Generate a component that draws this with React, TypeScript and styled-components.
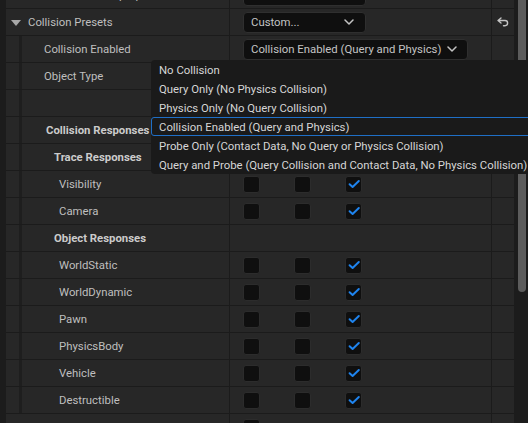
import React from "react";
import styled, { createGlobalStyle } from "styled-components";

const GlobalStyle = createGlobalStyle`
  html, body {
    margin: 0;
    padding: 0;
    background: #1c1c1c;
  }
  * {
    box-sizing: border-box;
  }
`;

type Combo = { kind: "combo"; text: string; width: number };
type Checks = { kind: "checks"; values: boolean[] };

type RowData = {
  label: string;
  pad: number;
  nested?: boolean;
  bold?: boolean;
  expander?: boolean;
  reset?: boolean;
  value?: Combo | Checks;
};

const ON: boolean[] = [false, false, true];

// the panel is scrolled: the first row is mostly above the top edge
const rows: RowData[] = [
  { label: "Can Character Step Up On", pad: 0, value: { kind: "combo", text: "", width: 123 } },
  {
    label: "Collision Presets",
    pad: 0,
    expander: true,
    reset: true,
    value: { kind: "combo", text: "Custom...", width: 123 },
  },
  {
    label: "Collision Enabled",
    pad: 22,
    nested: true,
    value: { kind: "combo", text: "Collision Enabled (Query and Physics)", width: 225 },
  },
  { label: "Object Type", pad: 22, nested: true },
  { label: "", pad: 22, nested: true },
  { label: "Collision Responses", pad: 24, nested: true, bold: true },
  { label: "Trace Responses", pad: 32, nested: true, bold: true },
  { label: "Visibility", pad: 37, nested: true, value: { kind: "checks", values: ON } },
  { label: "Camera", pad: 37, nested: true, value: { kind: "checks", values: ON } },
  { label: "Object Responses", pad: 32, nested: true, bold: true },
  { label: "WorldStatic", pad: 37, nested: true, value: { kind: "checks", values: ON } },
  { label: "WorldDynamic", pad: 37, nested: true, value: { kind: "checks", values: ON } },
  { label: "Pawn", pad: 37, nested: true, value: { kind: "checks", values: ON } },
  { label: "PhysicsBody", pad: 37, nested: true, value: { kind: "checks", values: ON } },
  { label: "Vehicle", pad: 37, nested: true, value: { kind: "checks", values: ON } },
  { label: "Destructible", pad: 37, nested: true, value: { kind: "checks", values: ON } },
  { label: "", pad: 0, value: { kind: "checks", values: [false] } },
];

const menuItems = [
  "No Collision",
  "Query Only (No Physics Collision)",
  "Physics Only (No Query Collision)",
  "Collision Enabled (Query and Physics)",
  "Probe Only (Contact Data, No Query or Physics Collision)",
  "Query and Probe (Query Collision and Contact Data, No Physics Collision)",
];

function Chevron() {
  return (
    <Icon width="10" height="6" viewBox="0 0 10 6">
      <path d="M1 1 L5 5 L9 1" fill="none" stroke="#c4c4c4" strokeWidth="1.5" strokeLinecap="round" strokeLinejoin="round" />
    </Icon>
  );
}

function CheckMark() {
  return (
    <Icon width="16" height="16" viewBox="0 0 16 16">
      <path d="M3.6 8.2 L6.6 11 L12.8 5" fill="none" stroke="#1f84ee" strokeWidth="2" strokeLinecap="round" strokeLinejoin="round" />
    </Icon>
  );
}

function ResetArrow() {
  return (
    <Icon width="12" height="10" viewBox="0 0 12 10">
      <path
        d="M4 1 L1 3.5 L4 6 M1.5 3.5 H8 A2.6 2.6 0 0 1 8 8.7 H6.5"
        fill="none"
        stroke="#c4c4c4"
        strokeWidth="1.4"
        strokeLinecap="round"
        strokeLinejoin="round"
      />
    </Icon>
  );
}

function ExpandTriangle() {
  return (
    <Icon width="10" height="6" viewBox="0 0 10 6">
      <path d="M0 0 H10 L5 6 Z" fill="#a8a8a8" />
    </Icon>
  );
}

function Value({ value }: { value?: Combo | Checks }) {
  if (!value) return null;
  if (value.kind === "combo") {
    return (
      <ComboBox $width={value.width}>
        <span>{value.text}</span>
        <Chevron />
      </ComboBox>
    );
  }
  return (
    <>
      {value.values.map((on, i) => (
        <CheckBox key={i}>{on && <CheckMark />}</CheckBox>
      ))}
    </>
  );
}

function PropertyRow({ row }: { row: RowData }) {
  return (
    <Row>
      <NameCell>
        {row.nested && <IndentGuide />}
        <Label $pad={row.pad} $bold={row.bold}>
          {!row.nested &&
            (row.expander ? (
              <Expander>
                <ExpandTriangle />
              </Expander>
            ) : (
              <ExpanderSpace />
            ))}
          {row.label}
        </Label>
      </NameCell>
      <ValueCell>
        <Value value={row.value} />
      </ValueCell>
      <ResetCell>{row.reset && <ResetArrow />}</ResetCell>
    </Row>
  );
}

export default function App() {
  return (
    <>
      <GlobalStyle />
      <Frame>
        <Gutter />
        <Panel>
          <List>
            {rows.map((row, i) => (
              <PropertyRow key={i} row={row} />
            ))}
          </List>
        </Panel>
        <ScrollTrack>
          <ScrollThumb />
        </ScrollTrack>
        <Menu>
          {menuItems.map((item) => (
            <MenuItem key={item} $selected={item === "Collision Enabled (Query and Physics)"}>
              {item}
            </MenuItem>
          ))}
        </Menu>
      </Frame>
    </>
  );
}

const Frame = styled.div`
  position: relative;
  width: 528px;
  height: 423px;
  overflow: hidden;
  display: flex;
  background: #1c1c1c;
  font-family: Roboto, "Noto Sans", sans-serif;
  font-size: 11.35px;
`;

const Icon = styled.svg`
  flex-shrink: 0;
  display: block;
`;

const Gutter = styled.div`
  width: 6px;
  flex-shrink: 0;
  background: #1c1c1c;
`;

const Panel = styled.div`
  width: 508px;
  overflow: hidden;
`;

const List = styled.div`
  display: flex;
  flex-direction: column;
  margin-top: -18px;
`;

const Row = styled.div`
  display: grid;
  grid-template-columns: 223px 261px 22px;
  column-gap: 1px;
  height: 27px;
  background: #1b1b1b;
  border-bottom: 1px solid #1b1b1b;
`;

const NameCell = styled.div`
  display: flex;
  align-items: stretch;
  background: #272727;
  overflow: hidden;
`;

const IndentGuide = styled.div`
  width: 16px;
  flex-shrink: 0;
  border-right: 3px solid #1e1e1e;
`;

const Label = styled.div<{ $pad: number; $bold?: boolean }>`
  display: flex;
  align-items: center;
  padding-left: ${(p) => p.$pad}px;
  color: ${(p) => (p.$bold ? "#cbcbcb" : "#bfbfbf")};
  font-weight: ${(p) => (p.$bold ? 700 : 400)};
  white-space: nowrap;
`;

const Expander = styled.span`
  display: inline-flex;
  width: 17px;
  margin-left: 5px;
  margin-top: 1px;
`;

const ExpanderSpace = styled.span`
  display: inline-block;
  width: 22px;
`;

const ValueCell = styled.div`
  display: flex;
  align-items: center;
  gap: 34px;
  padding-left: 13px;
  background: #272727;
`;

const ComboBox = styled.div<{ $width: number }>`
  display: flex;
  align-items: center;
  justify-content: space-between;
  gap: 6px;
  flex-shrink: 0;
  width: ${(p) => p.$width}px;
  height: 21px;
  padding: 0 11px 0 7px;
  background: #0f0f0f;
  border: 1px solid #2f2f2f;
  border-radius: 4px;
  color: #c4c4c4;
  white-space: nowrap;
`;

const CheckBox = styled.div`
  width: 17px;
  height: 17px;
  display: flex;
  align-items: center;
  justify-content: center;
  background: #0f0f0f;
  border: 1px solid #2c2c2c;
  border-radius: 3px;
`;

const ResetCell = styled.div`
  display: flex;
  align-items: center;
  justify-content: center;
  background: #272727;
  padding-right: 1px;
`;

const ScrollTrack = styled.div`
  width: 14px;
  flex-shrink: 0;
  padding-left: 4px;
  background: #1c1c1c;
`;

const ScrollThumb = styled.div`
  width: 8px;
  height: 292px;
  background: #5c5c5c;
  border-radius: 0 0 4px 4px;
`;

const Menu = styled.div`
  position: absolute;
  left: 151px;
  top: 60px;
  width: 400px;
  display: flex;
  flex-direction: column;
  background: #1a1a1a;
  border-radius: 4px 0 0 4px;
`;

const MenuItem = styled.div<{ $selected?: boolean }>`
  height: 19px;
  display: flex;
  align-items: center;
  padding-left: ${(p) => (p.$selected ? 7 : 8)}px;
  color: #d6d6d6;
  white-space: nowrap;
  border: ${(p) => (p.$selected ? "1px solid #1f6fc6" : "none")};
  border-radius: 3px 0 0 3px;
`;
